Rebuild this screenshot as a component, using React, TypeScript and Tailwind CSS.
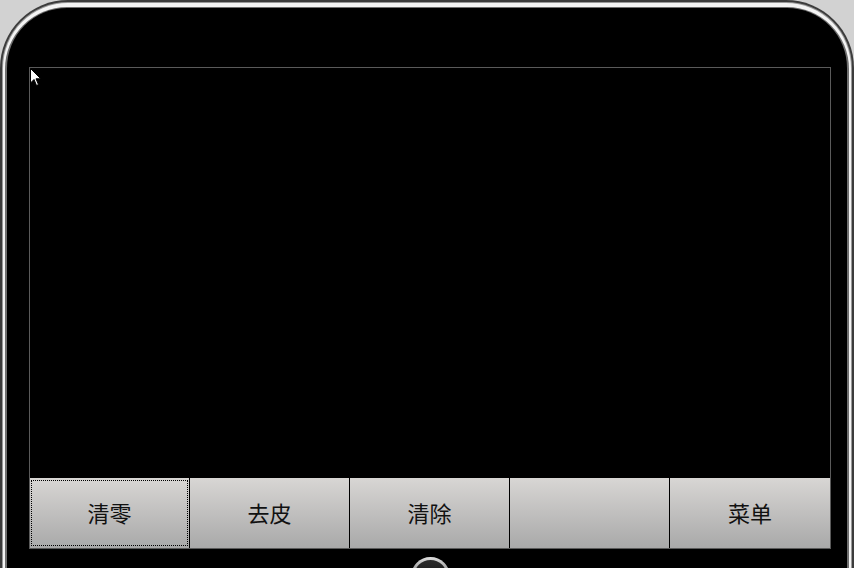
const buttons = ["清零", "去皮", "清除", "", "菜单"];

function Cursor() {
  return (
    <svg className="absolute left-[30px] top-[68px]" width="12" height="19" viewBox="0 0 12 19">
      <path d="M0.5 0.5 L0.5 15 L4 11.5 L6.5 17.5 L8.5 16.6 L6 10.8 L10.8 10.8 Z" fill="#fff" stroke="#000" strokeWidth="1" />
    </svg>
  );
}

export default function App() {
  return (
    <div className="relative h-[568px] w-[854px] overflow-hidden bg-[#d2d2d2]">
      <div className="h-[640px] w-[854px] rounded-[68px] bg-[#3c3c3c] p-[2px]">
        <div className="h-full rounded-[66px] bg-[#9a9a9a] px-px pt-px">
          <div className="h-full rounded-[65px] bg-[#f4f4f4] px-[2px] pt-[4px]">
            <div className="h-full rounded-[62px] bg-[#6f6f6f] px-[2px] pt-px">
              <div className="h-full rounded-[60px] bg-black pl-[22px] pt-[59px]">
                <div className="flex w-[802px] flex-col items-center">
                  <div className="flex h-[482px] w-[802px] flex-col border border-[#5a5a5a] bg-black">
                    <div className="flex-1" />
                    <div className="flex h-[70px]">
                      {buttons.map((label, i) => (
                        <div
                          key={i}
                          className={
                            "relative flex h-full w-[160px] items-center justify-center bg-gradient-to-b from-[#d8d6d4] to-[#a9a9a9] text-[22px] text-[#111] " +
                            (i < 4 ? "border-r border-black" : "")
                          }
                          style={{ fontFamily: '"Noto Sans CJK SC", sans-serif' }}
                        >
                          {i === 0 && (
                            <div className="absolute inset-x-[1px] inset-y-[2px] border border-dotted border-black" />
                          )}
                          <span className="relative -mt-[1px] font-normal">{label}</span>
                        </div>
                      ))}
                    </div>
                  </div>
                  <div className="mt-[8px] h-[39px] w-[39px] rounded-full bg-gradient-to-b from-[#e0e0e0] via-[#777] to-[#333] p-[3px]">
                    <div className="h-full w-full rounded-full bg-gradient-to-b from-[#2a2a2a] to-[#0a0a0a]" />
                  </div>
                </div>
              </div>
            </div>
          </div>
        </div>
      </div>
      <Cursor />
    </div>
  );
}
